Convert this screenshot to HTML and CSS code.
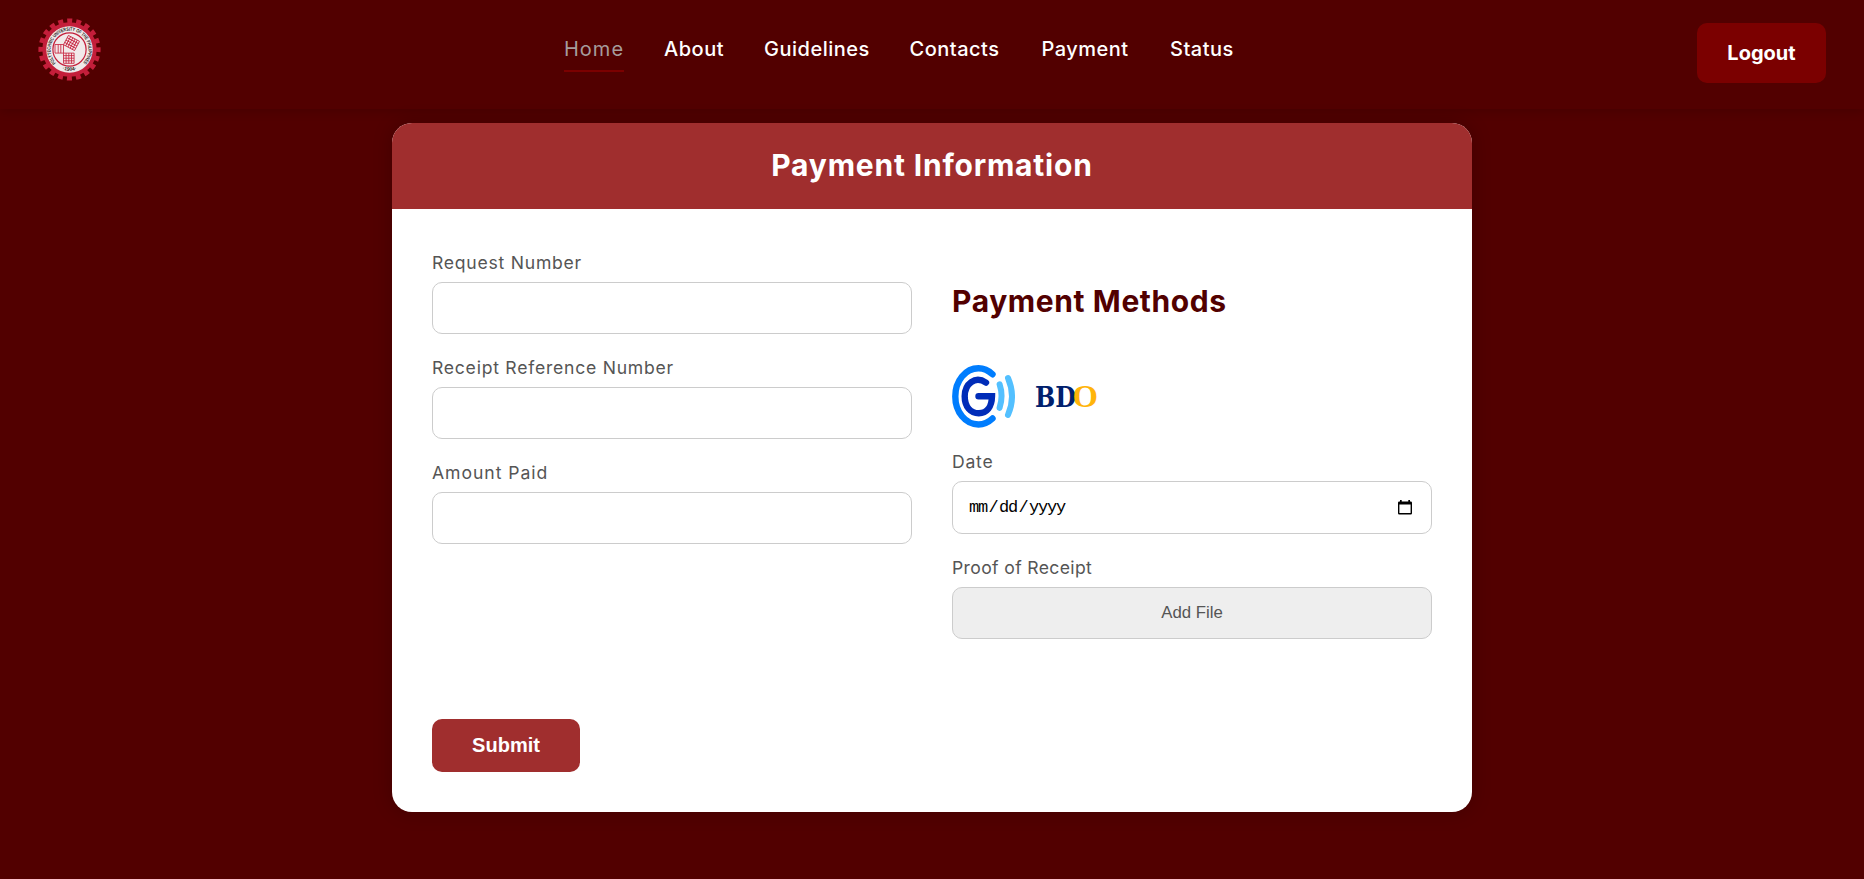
FILE: index.html
```html
<!DOCTYPE html>
<html lang="en">
<head>
<meta charset="utf-8">
<title>Payment Information</title>
<link rel="stylesheet" href="styles.css">
</head>
<body>
<header class="topbar">
  <svg class="seal" viewBox="-31.5 -31.5 63 63" aria-label="Polytechnic University of the Philippines">
    <circle r="28.700" fill="none" stroke="#c41e3a" stroke-width="4.800" stroke-dasharray="5 4.016" stroke-dashoffset="2.500"/>
    <circle r="27.200" fill="#c41e3a"/>
    <circle r="23.200" fill="#eee9e9"/>
    <circle r="16.600" fill="#f1eaea" stroke="#c41e3a" stroke-width="1.200"/>
    <defs>
      <path id="ring" d="M-13.400 13.400A18.900 18.900 0 1 1 13.400 13.400"/>
      <path id="base" d="M-10 18.800A21.300 21.300 0 0 0 10 18.800"/>
    </defs>
    <text class="seal-text"><textPath href="#ring" textLength="88" lengthAdjust="spacingAndGlyphs">POLYTECHNIC UNIVERSITY OF THE PHILIPPINES</textPath></text>
    <text class="seal-text"><textPath href="#base" startOffset="50%" text-anchor="middle">·1904·</textPath></text>
    <g fill="#f4e4e6" stroke="#c41e3a" stroke-width=".8">
      <path d="M-14.500-5h8.500v8.600h-8.500zM-11.300-5v8.600M-8.700-5v8.600"/>
      <path d="M-6 3.600h10.600v10.200H-6zM-3.400 3.600v10.200M-.7 3.600v10.200M2 3.600v10.200M-6 6.100H4.600M-6 8.700H4.600M-6 11.300H4.600"/>
      <path transform="translate(-6 -4.800) rotate(-62)" d="M0 0h10.500v12.500H0zM2.600 0v12.500M5.200 0v12.500M7.900 0v12.500M0 2.500h10.500M0 5h10.500M0 7.500h10.500M0 10h10.500"/>
    </g>
  </svg>
  <nav class="menu">
    <a class="link active">Home</a>
    <a class="link">About</a>
    <a class="link">Guidelines</a>
    <a class="link">Contacts</a>
    <a class="link">Payment</a>
    <a class="link">Status</a>
  </nav>
  <button class="logout">Logout</button>
</header>
<main class="card">
  <h1 class="card-title">Payment Information</h1>
  <form class="form">
    <div class="columns">
      <section class="column">
        <div class="field"><label class="label">Request Number</label><input class="control" type="text"></div>
        <div class="field"><label class="label">Receipt Reference Number</label><input class="control" type="text"></div>
        <div class="field"><label class="label amount">Amount Paid</label><input class="control" type="text"></div>
      </section>
      <section class="column">
        <h2 class="methods-title">Payment Methods</h2>
        <div class="methods">
          <svg class="method" viewBox="0 0 63 63" fill="none" stroke-linecap="round" aria-label="GCash">
            <path stroke="#007dfe" stroke-width="6.400" d="M40.500 9.300C36.500 5.500 32 3.300 26.500 3.300C13.500 3.300 3.300 15.900 3.300 31.400S13.500 59.500 26.500 59.500C32 59.500 36.500 57.300 40.500 53.500"/>
            <path stroke="#002cb8" stroke-width="6.400" d="M34 17.600C23 10.300 12.700 19 12.700 31.300C12.700 42 18.600 48.200 26.800 48.200C34.800 48.200 39.800 42 40 31.300H26.500"/>
            <path stroke="#53c0ff" stroke-width="6" d="M47.600 19.300Q51.500 31 47.600 42.800M56 13Q64 31.500 56 49.900"/>
          </svg>
          <svg class="method" viewBox="0 0 63 63" aria-label="BDO">
            <text class="bank" x="0" y="42" textLength="41" lengthAdjust="spacingAndGlyphs">BD</text>
            <text class="bank gold" x="37.500" y="42" textLength="25.500" lengthAdjust="spacingAndGlyphs">O</text>
          </svg>
        </div>
        <div class="field"><label class="label">Date</label>
          <div class="control date">
            <span class="date-text"><span>mm</span><span class="slash">/</span><span>dd</span><span class="slash">/</span><span>yyyy</span></span>
            <svg class="calendar" viewBox="0 0 14 15"><path fill="#000" fill-rule="evenodd" d="M2 0h1.700v1.400h6.600V0H12v1.400h.7Q14 1.400 14 2.700v10.500q0 1.300-1.300 1.300H1.300Q0 14.500 0 13.200V2.700q0-1.300 1.300-1.300H2zM1.400 4.500v8.600h11.200V4.500z"/></svg>
          </div>
        </div>
        <div class="field"><label class="label proof">Proof of Receipt</label><button type="button" class="control file">Add File</button></div>
      </section>
    </div>
    <button type="button" class="submit">Submit</button>
  </form>
</main>
</body>
</html>
```
FILE: styles.css
```css
* { box-sizing: border-box; }
html, body { height: 100%; }
body {
  margin: 0;
  background: #520000;
  font-family: Inter, "Open Sans", sans-serif;
  overflow: hidden;
}
.topbar {
  height: 109px;
  padding: 18px 38px 0;
  display: grid;
  grid-template-columns: 526px 1fr 129px;
  align-items: start;
  box-shadow: 0 2px 10px rgba(0, 0, 0, .15);
}
.seal { width: 63px; height: 63px; display: block; }
.seal-text { font: bold 5px "Liberation Sans", sans-serif; fill: #292323; }
.menu {
  display: grid;
  grid-template-columns: 60px 60px 105px 91px 90px 63px;
  column-gap: 40px;
  padding-top: 16px;
}
.link {
  height: 38px;
  line-height: 30px;
  font-size: 20px;
  font-weight: 500;
  letter-spacing: .5px;
  color: #fff;
  text-align: center;
  white-space: nowrap;
}
.link.active {
  color: #a69c9c;
  font-weight: 400;
  letter-spacing: 1px;
  border-bottom: 2px solid #7b0000;
}
.logout {
  margin-top: 5px;
  height: 60px;
  border: 0;
  border-radius: 10px;
  background: #7b0000;
  color: #fff;
  font: 700 20px Inter, sans-serif;
}
.card {
  width: 1080px;
  height: 689px;
  margin: 14px auto 0;
  border-radius: 20px;
  overflow: hidden;
  background: #fff;
  box-shadow: 0 0 20px rgba(0, 0, 0, .2);
}
.card-title {
  margin: 0;
  height: 86px;
  background: #a02e2e;
  color: #fff;
  font-size: 30px;
  font-weight: 700;
  letter-spacing: .8px;
  line-height: 84px;
  text-align: center;
}
.form { padding: 40px; }
.columns { height: 470px; display: grid; grid-template-columns: 1fr 1fr; gap: 40px; }
.field { margin-bottom: 20px; }
.label {
  display: block;
  height: 33px;
  line-height: 28px;
  font-size: 17.6px;
  letter-spacing: .75px;
  color: #555;
  white-space: nowrap;
}
.amount { letter-spacing: .95px; }
.proof { letter-spacing: .35px; }
.control {
  display: block;
  width: 100%;
  height: 52px;
  border: 1px solid #ccc;
  border-radius: 10px;
  background: #fff;
}
.methods-title {
  margin: 28px 0 37px;
  height: 51px;
  line-height: 49px;
  font-size: 30px;
  font-weight: 700;
  letter-spacing: .6px;
  color: #520000;
}
.methods { display: flex; gap: 20px; height: 63px; margin-bottom: 20px; }
.method { width: 63px; height: 63px; }
.bank { font: bold 28.5px "DejaVu Serif", serif; fill: #00206d; }
.bank.gold { font: bold 32px "Liberation Serif", serif; fill: #ffb40a; }
.date {
  height: 53px;
  padding: 0 19px 0 16px;
  display: flex;
  align-items: center;
  justify-content: space-between;
}
.date-text {
  display: flex;
  font: 17px "Liberation Mono", monospace;
  letter-spacing: -1.2px;
}
.slash { width: 12px; text-align: center; }
.calendar { width: 14px; height: 15px; }
.file { background: #eee; color: #555; font: 16.8px "Liberation Sans", sans-serif; }
.submit {
  width: 148px;
  height: 53px;
  border: 0;
  border-radius: 10px;
  background: #a02e2e;
  color: #fff;
  font: bold 20px "Liberation Sans", sans-serif;
}
```
